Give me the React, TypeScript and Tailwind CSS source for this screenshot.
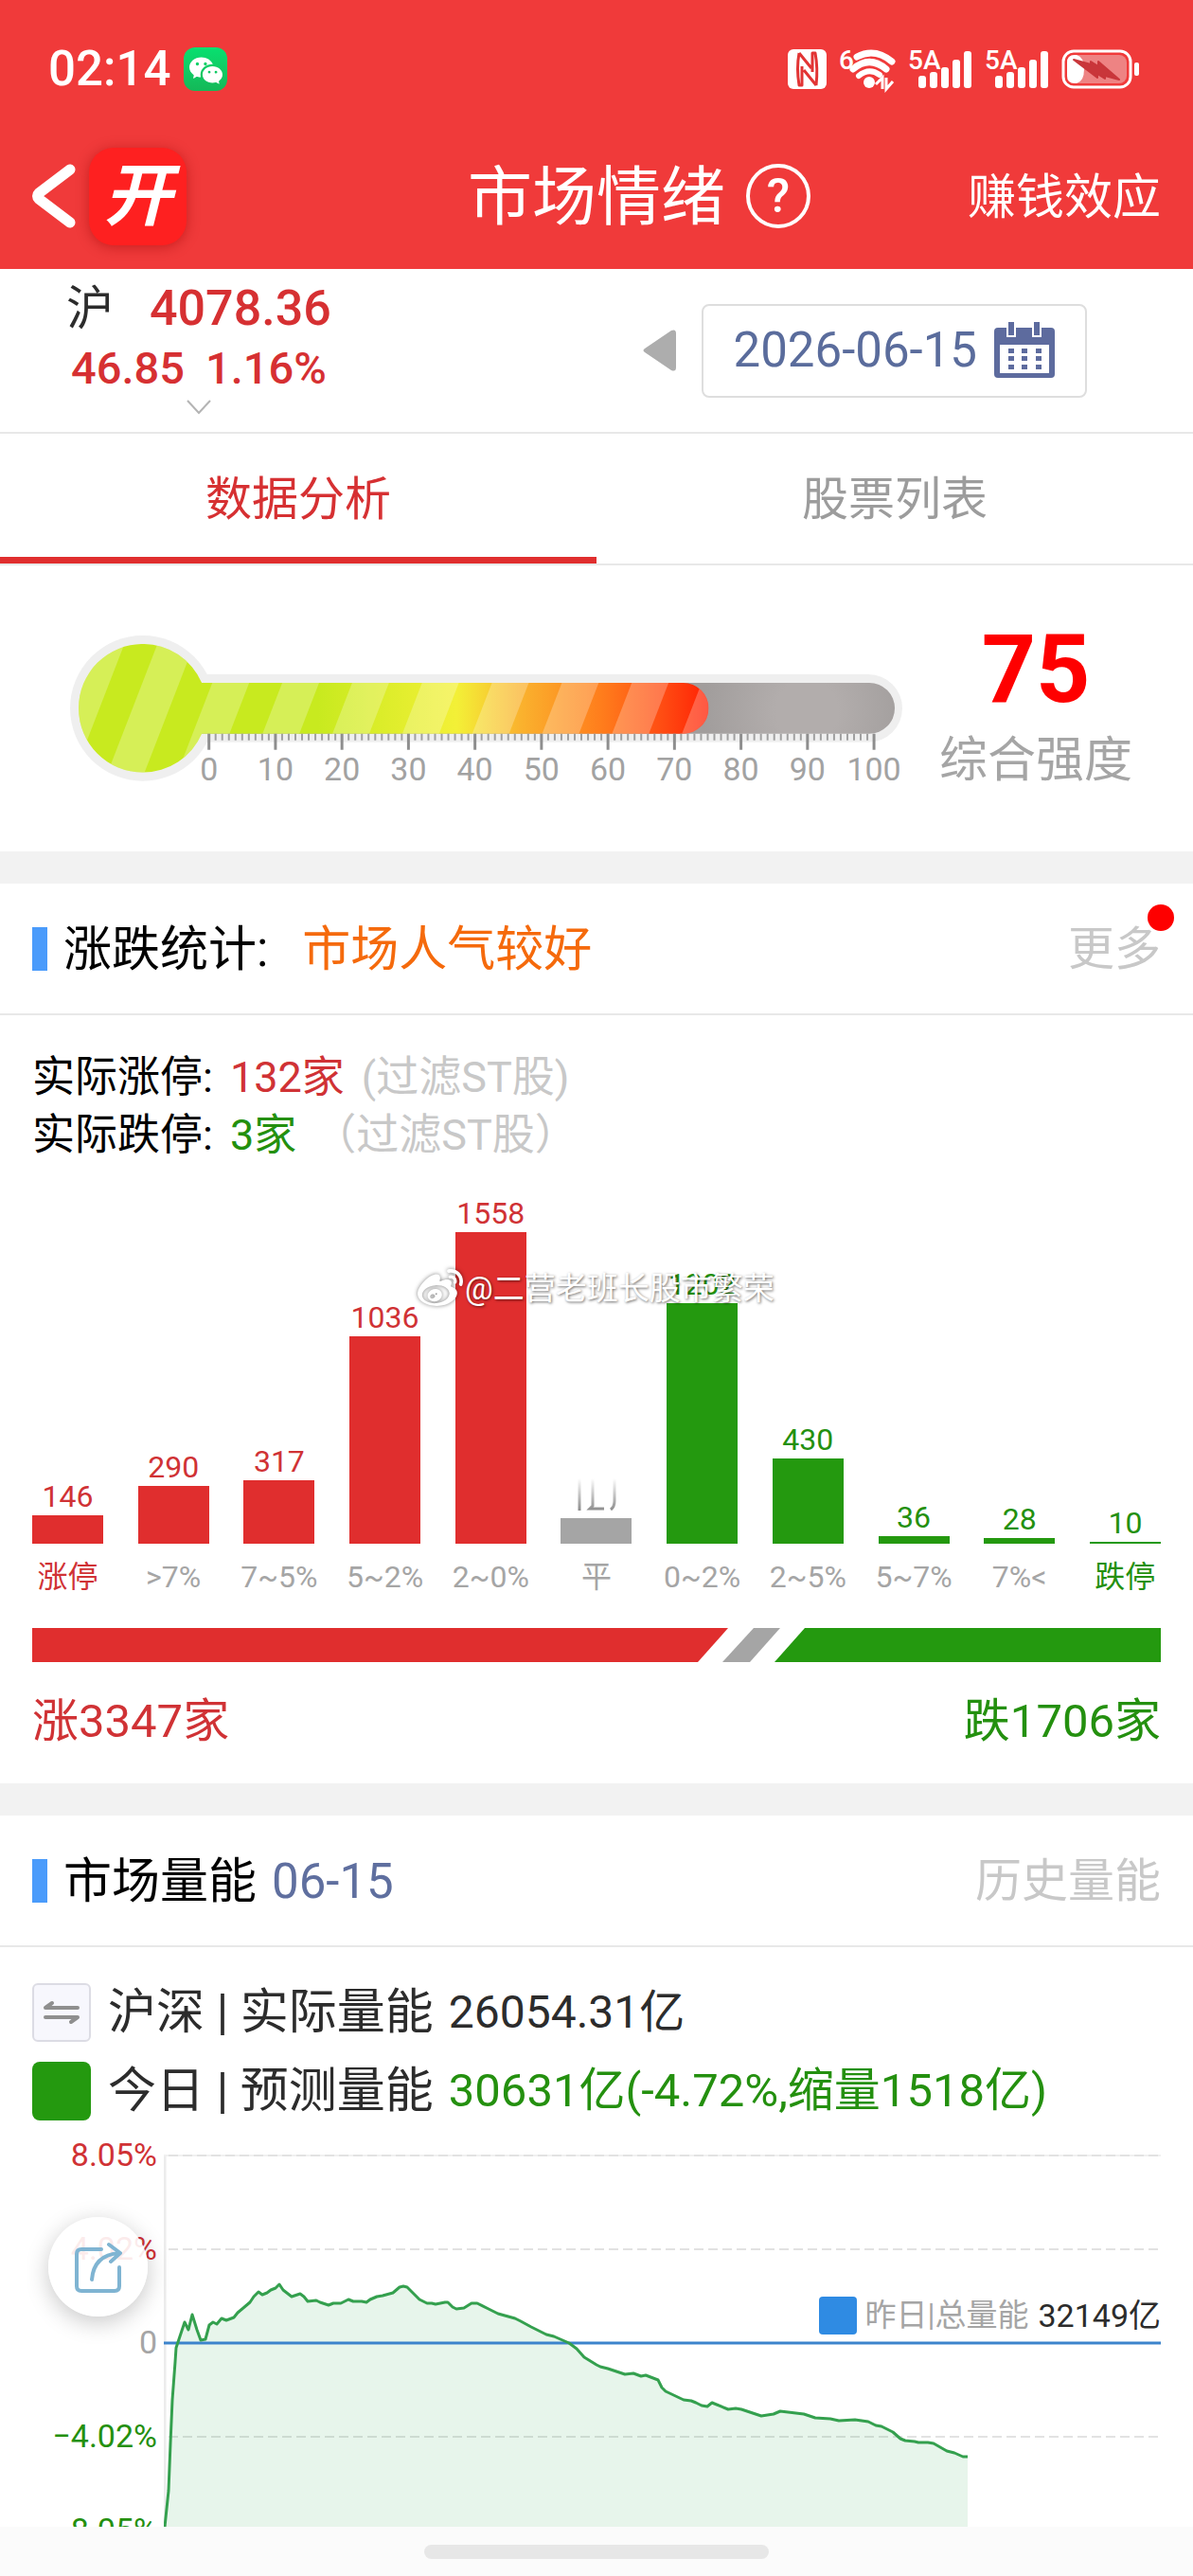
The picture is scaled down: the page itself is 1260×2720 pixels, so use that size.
import type { ReactNode } from "react";
import clsx from "clsx";
import { BsWechat } from "react-icons/bs";
import { FaWeibo } from "react-icons/fa";

type Tone = "up" | "down" | "flat";

const bars: { label: string; value: number; tone: Tone; height: number }[] = [
  { label: "涨停", value: 146, tone: "up", height: 30 },
  { label: ">7%", value: 290, tone: "up", height: 61 },
  { label: "7~5%", value: 317, tone: "up", height: 67 },
  { label: "5~2%", value: 1036, tone: "up", height: 219 },
  { label: "2~0%", value: 1558, tone: "up", height: 329 },
  { label: "平", value: 129, tone: "flat", height: 27 },
  { label: "0~2%", value: 1202, tone: "down", height: 254 },
  { label: "2~5%", value: 430, tone: "down", height: 90 },
  { label: "5~7%", value: 36, tone: "down", height: 8 },
  { label: "7%<", value: 28, tone: "down", height: 6 },
  { label: "跌停", value: 10, tone: "down", height: 2 },
];

const barColor = { up: "bg-[#e02e2e]", down: "bg-[#24990f]", flat: "bg-[#a5a5a5]" };
const textColor = { up: "text-[#d03235]", down: "text-[#24900f]", flat: "text-[#a5a5a5]" };

const volumeLine =
  "1,393 5,355 7,305 9,259 12,219 13,204 16,195 22,177 26,185 30,169 35,185 39,196 44,195 48,180 52,177 56,179 61,173 66,175 74,172 78,167 91,156 95,150 100,145 104,148 109,146 113,143 118,141 122,137 126,143 135,150 144,147 148,150 152,155 161,154 165,156 174,159 179,157 187,157 195,153 200,155 209,155 214,156 218,153 225,150 231,149 242,146 249,140 253,139 257,140 261,144 270,153 278,157 283,157 287,158 297,156 300,156 305,161 309,163 317,162 325,157 331,157 343,163 353,168 371,173 377,176 388,182 404,190 412,192 428,199 436,205 444,214 457,222 461,224 469,226 487,232 496,231 504,234 509,233 522,238 526,246 530,250 549,259 557,260 562,262 568,265 574,266 579,262 596,269 604,268 610,269 631,276 644,274 651,271 676,274 688,278 704,279 713,281 730,280 744,282 752,286 758,287 770,293 778,300 783,302 793,303 797,304 807,304 813,305 827,313 835,315 844,319 849,319";

function Signal() {
  return (
    <svg width="68" height="44" viewBox="0 0 68 44" fill="white" className="overflow-visible" aria-label="5A信号">
      <text x="0" y="22" className="font-medium text-[28px]">5A</text>
      <rect x="11" y="29" width="8" height="13" rx="3" />
      <rect x="23" y="25" width="8" height="17" rx="3" />
      <rect x="35" y="20" width="8" height="22" rx="3" />
      <rect x="47" y="12" width="8" height="30" rx="3" />
      <rect x="59" y="3" width="8" height="39" rx="3" />
    </svg>
  );
}

function StatusBar() {
  return (
    <div className="flex h-[46px] items-center justify-between pr-[57px] pl-[51px]">
      <div className="flex items-center gap-[14px]">
        <span className="text-[51px] leading-[46px] font-medium">02:14</span>
        <span className="flex size-[46px] items-center justify-center rounded-xl bg-gradient-to-b from-[#07e070] to-[#14b858]">
          <BsWechat size={35} />
        </span>
      </div>
      <div className="flex items-center gap-[13px]">
        <svg width="41" height="42" viewBox="0 0 41 42" aria-label="NFC">
          <rect width="41" height="42" rx="6" fill="white" />
          <path
            d="M12 4 Q9 20 12 38 H15 V18 M12 4 L25 20 M30 38 L17 22 M26 24 V4 H29 Q32 20 30 38"
            fill="none"
            stroke="#e23434"
            strokeWidth="3"
            strokeLinejoin="round"
          />
        </svg>
        <svg width="60" height="44" viewBox="0 0 60 44" fill="none" stroke="white" className="overflow-visible" aria-label="Wi-Fi 6">
          <text x="0" y="22" fill="white" stroke="none" className="font-medium text-[28px]">6</text>
          <path d="M19 9 Q38 -1 56 14" strokeWidth="7" strokeLinecap="round" />
          <path d="M15 22 Q32 7 50 22" strokeWidth="7" strokeLinecap="round" />
          <path d="M21 29 Q32 20 43 28" strokeWidth="6" strokeLinecap="round" />
          <circle cx="32" cy="36" r="6" fill="white" stroke="none" />
          <path d="M39 38 L46 31 V43 M50 31 V43 L57 35" strokeWidth="3" />
        </svg>
        <Signal />
        <Signal />
        <svg width="82" height="42" viewBox="0 0 82 42" aria-label="充电中">
          <rect x="2" y="2" width="71" height="38" rx="11" fill="none" stroke="white" strokeWidth="3" />
          <rect x="6" y="6" width="63" height="30" rx="8" fill="#ee8383" />
          <path d="M14 6 H16 Q24 8 24 21 T16 36 H14 Q6 36 6 28 V14 Q6 6 14 6Z" fill="white" />
          <path d="M13 11 L31 16 V13 L39 18 V13 L61 32 L46 28 V31 L38 26 V30 Z" fill="#c9363a" stroke="#c9363a" strokeWidth="2" strokeLinejoin="round" />
          <rect x="77" y="14" width="5" height="14" rx="2" fill="white" />
        </svg>
      </div>
    </div>
  );
}

function Header() {
  return (
    <header className="bg-[#f03a3a] pt-[50px] pb-[25px] text-white">
      <StatusBar />
      <div className="mt-[59px] grid h-[104px] grid-cols-[1fr_auto_1fr] items-center">
        <div className="flex items-center gap-[14px] pl-[34px]">
          <button type="button" aria-label="返回">
            <svg width="46" height="82" viewBox="0 0 46 82" fill="none" stroke="white" strokeWidth="11" strokeLinecap="round" strokeLinejoin="round">
              <path d="M40 13 L7 38 Q4 41 7 44 L40 69" />
            </svg>
          </button>
          <div className="flex size-[103px] items-center justify-center rounded-[26px] bg-[#fe2020] text-[72px] leading-[103px] font-bold italic shadow-[0_2px_14px_rgba(150,0,0,0.45)]">
            开
          </div>
        </div>
        <h1 className="pt-1 text-[68px] leading-[100px]">市场情绪</h1>
        <div className="flex items-center justify-between pr-[34px] pl-[22px]">
          <button type="button" className="flex size-[68px] items-center justify-center rounded-full border-4 border-white text-[50px] leading-[60px] font-medium">
            ?
          </button>
          <a href="#effect" className="pt-1 text-[51px] leading-[60px]">赚钱效应</a>
        </div>
      </div>
    </header>
  );
}

function IndexBar() {
  return (
    <div className="flex h-[174px] items-center justify-between border-b-2 border-[#e8e8e8] pr-[112px] pl-[70px]">
      <button type="button" className="flex flex-col items-center self-start pt-3 text-[#d63032]">
        <span className="flex items-center gap-[38px]">
          <span className="text-[50px] leading-[60px] text-[#2c2c2c]">沪</span>
          <span className="text-[52px] leading-[60px] font-medium">4078.36</span>
        </span>
        <span className="flex gap-[22px] text-[47px] leading-[66px] font-medium">
          <span>46.85</span>
          <span>1.16%</span>
        </span>
        <svg width="26" height="16" viewBox="0 0 26 16" fill="none" stroke="#b4b4b4" strokeWidth="2">
          <path d="M1 1 L13 14 L25 1" />
        </svg>
      </button>
      <div className="flex items-center gap-[26px]">
        <button type="button" aria-label="前一天">
          <svg width="36" height="44" viewBox="0 0 36 44" fill="#adadad">
            <path d="M2 20 L30 1 Q35 -1 35 4 V40 Q35 45 30 43 L2 24 Q-1 22 2 20Z" />
          </svg>
        </button>
        <button type="button" className="flex h-[99px] items-center gap-[18px] rounded-lg border-2 border-[#dedede] px-8 text-[51px] text-[#5a6c9c]">
          2026-06-15
          <svg width="64" height="60" viewBox="0 0 64 60" fill="#5d6b9e">
            <path d="M4 6 H60 Q64 6 64 10 V55 Q64 59 60 59 H4 Q0 59 0 55 V10 Q0 6 4 6Z" />
            <path d="M6 24 H58 V54 H6Z M13 0 H23 V16 H13Z M40 0 H50 V16 H40Z" fill="white" />
            <path d="M15 0 H21 V14 H15Z M42 0 H48 V14 H42Z" />
            <path d="M15 28h6v5h-6z M29 28h6v5h-6z M44 28h6v5h-6z M15 36h6v5h-6z M29 36h6v5h-6z M44 36h6v5h-6z M15 45h6v5h-6z M29 45h6v5h-6z M44 45h6v5h-6z" />
          </svg>
        </button>
      </div>
    </div>
  );
}

function Tabs() {
  return (
    <div role="tablist" className="grid h-[139px] grid-cols-2 border-b-2 border-[#e8e8e8] text-[49px]">
      <button type="button" role="tab" aria-selected="true" className="border-b-[7px] border-[#e02e2e] pt-[9px] text-[#d63032]">
        数据分析
      </button>
      <button type="button" role="tab" aria-selected="false" className="pt-0.5 text-[#9c9c9c]">
        股票列表
      </button>
    </div>
  );
}

function Thermometer() {
  const ticks = Array.from({ length: 101 }, (_, i) => i);
  const stripes = Array.from({ length: 10 }, (_, i) => 2 + i * 74);

  return (
    <svg viewBox="0 0 888 164" className="block h-auto w-full" role="img" aria-label="综合强度 75">
      <defs>
        <linearGradient id="heat" gradientUnits="userSpaceOnUse" x1="9" y1="0" x2="676" y2="0">
          <stop offset="0.38" stopColor="#c8ea1f" />
          <stop offset="0.6" stopColor="#f3f037" />
          <stop offset="0.7" stopColor="#fab32e" />
          <stop offset="0.83" stopColor="#ff7d1c" />
          <stop offset="0.93" stopColor="#ff4a12" />
          <stop offset="1" stopColor="#ff2004" />
        </linearGradient>
        <radialGradient id="tube" gradientUnits="userSpaceOnUse" cx="780" cy="80" r="110">
          <stop offset="0.3" stopColor="#b2adac" />
          <stop offset="1" stopColor="#a19d9c" />
        </radialGradient>
        <clipPath id="liquid">
          <circle cx="77" cy="77" r="68" />
          <path d="M77 50 H649 A27 27 0 0 1 649 104 H77Z" />
        </clipPath>
      </defs>
      <circle cx="77" cy="77" r="77" fill="#efefef" />
      <rect x="77" y="41" width="804" height="72" rx="36" fill="#efefef" />
      <rect x="77" y="50" width="796" height="54" rx="27" fill="url(#tube)" />
      <g clipPath="url(#liquid)">
        <rect width="700" height="160" fill="url(#heat)" />
        {stripes.map((x) => (
          <path key={x} d={`M${x + 20} 0 h39 l-62 160 h-39Z`} fill="white" fillOpacity="0.25" />
        ))}
      </g>
      {ticks.map((i) => {
        const major = i % 10 === 0;
        const x = 147 + i * 7.04;
        return (
          <line key={i} x1={x} x2={x} y1="104" y2={major ? 121 : 111} stroke={major ? "#8e8e8e" : "#a0a0a0"} strokeWidth={major ? 3 : 2} />
        );
      })}
      {ticks.filter((i) => i % 10 === 0).map((i) => (
        <text key={i} x={147 + i * 7.04} y="153" textAnchor="middle" fill="#a2a2a2" className="text-[34px]">
          {i}
        </text>
      ))}
    </svg>
  );
}

function SectionHeader({ title, extra, children }: { title: string; extra: ReactNode; children: ReactNode }) {
  return (
    <div className="flex h-[139px] items-center justify-between border-b-2 border-[#e8e8e8] px-[34px]">
      <div className="flex items-center">
        <span className="h-[46px] w-4 bg-[#4a9bfb]" />
        <h2 className="ml-[17px] pt-0.5 text-[51px] leading-[60px] text-black">{title}</h2>
        {extra}
      </div>
      {children}
    </div>
  );
}

function BarChart() {
  return (
    <div className="relative">
      <ul className="flex justify-between">
        {bars.map((bar) => (
          <li key={bar.label} className={clsx("flex w-[75px] flex-col items-center text-[32px] whitespace-nowrap", textColor[bar.tone])}>
            <div className="flex h-[401px] w-full flex-col items-center justify-end">
              {bar.tone === "flat" ? (
                <svg width="44" height="34" viewBox="0 0 44 34" className="mb-2" fill="none" stroke="url(#fade)" strokeWidth="3" aria-label={String(bar.value)}>
                  <defs>
                    <linearGradient id="fade" gradientUnits="userSpaceOnUse" x1="0" y1="0" x2="0" y2="34">
                      <stop offset="0" stopColor="#8c8c8c" stopOpacity="0" />
                      <stop offset="1" stopColor="#8c8c8c" />
                    </linearGradient>
                  </defs>
                  <path d="M4 0 V34 M18 0 V29 L15 32 H30 M41 0 V24 Q41 30 37 33" />
                </svg>
              ) : (
                <span className="leading-10">{bar.value}</span>
              )}
              <div className={clsx("w-full shrink-0", barColor[bar.tone])} style={{ height: bar.height }} />
            </div>
            <span className={clsx("mt-[15px] leading-10", bar.label.includes("停") ? "" : "text-[#a5a5a5]")}>{bar.label}</span>
          </li>
        ))}
      </ul>
      <div className="absolute top-[108px] left-[407px] flex items-center gap-0.5 text-[33px] leading-[48px] whitespace-nowrap text-white">
        <FaWeibo size={48} className="drop-shadow-[0_0_2px_rgba(0,0,0,0.5)]" />
        <span className="[text-shadow:1px_1px_3px_rgba(0,0,0,0.6)]">@二营老班长股市繁荣</span>
      </div>
    </div>
  );
}

function RiseFallSection() {
  return (
    <section>
      <SectionHeader title="涨跌统计:" extra={<span className="ml-9 pt-0.5 text-[51px] leading-[60px] text-[#f56a0c]">市场人气较好</span>}>
        <a href="#more" className="relative pt-0.5 text-[49px] leading-[60px] text-[#c8c8c8]">
          更多
          <span className="absolute -top-4 -right-[14px] size-7 rounded-full bg-[#fe0000]" />
        </a>
      </SectionHeader>
      <div className="px-[34px] pt-[35px] pb-[42px]">
        <p className="flex text-[45px] leading-[61px] text-black">
          <span>实际涨停:</span>
          <span className="ml-[18px] text-[#d03235]">132家</span>
          <span className="ml-[18px] text-[#c8c8c8]">(过滤ST股)</span>
        </p>
        <p className="flex text-[45px] leading-[61px] text-black">
          <span>实际跌停:</span>
          <span className="ml-[18px] text-[#24900f]">3家</span>
          <span className="ml-[18px] text-[#c8c8c8]">（过滤ST股）</span>
        </p>
        <BarChart />
        <svg viewBox="0 0 1192 36" preserveAspectRatio="none" className="mt-[34px] block h-9 w-full">
          <path d="M0 0 H735 L703 36 H0Z" fill="#e02e2e" />
          <path d="M762 0 H790 L758 36 H729Z" fill="#a5a5a5" />
          <path d="M816 0 H1192 V36 H784Z" fill="#24990f" />
        </svg>
        <div className="mt-10 flex justify-between text-[49px] leading-[46px]">
          <span className="text-[#d03235]">涨3347家</span>
          <span className="text-[#24900f]">跌1706家</span>
        </div>
      </div>
    </section>
  );
}

function VolumeChart() {
  return (
    <div className="relative flex h-[419px] gap-[7px] overflow-hidden pr-[34px]">
      <div className="flex w-[166px] shrink-0 flex-col gap-[47px] text-right text-[34px] leading-[52px]">
        <span className="text-[#d03235]">8.05%</span>
        <span className="text-[#d03235]">4.02%</span>
        <span className="text-[#a5a5a5]">0</span>
        <span className="text-[#24900f]">−4.02%</span>
        <span className="text-[#24900f]">−8.05%</span>
      </div>
      <svg viewBox="0 0 1053 393" preserveAspectRatio="none" className="mt-[26px] h-[393px] min-w-0 flex-1" fill="none" strokeWidth="2">
        <path d="M1 0 V393" stroke="#ececec" strokeWidth="3" />
        <path d="M0 1 H1053" stroke="#f0f0f0" />
        <path d="M5 1 H1053 M5 100 H1053 M5 298 H1053" stroke="#e2e2e2" strokeDasharray="10 5" />
        <polygon points={`${volumeLine} 849,393`} fill="#24a048" fillOpacity="0.11" />
        <path d="M0 199 H1053" stroke="#3c84cc" strokeWidth="3" />
        <polyline points={volumeLine} stroke="#34a04e" strokeWidth="3" strokeLinejoin="round" />
      </svg>
      <div className="absolute top-[176px] right-[34px] flex items-center text-[34px] leading-10">
        <span className="mr-2 size-10 rounded-sm bg-[#2f8be3]" />
        <span className="mr-[10px] text-[33px] text-[#a5a5a5]">昨日|总量能</span>
        <span className="text-[#2c2c2c]">32149亿</span>
      </div>
    </div>
  );
}

function VolumeSection() {
  return (
    <section>
      <SectionHeader title="市场量能" extra={<span className="ml-4 pt-0.5 text-[51px] leading-[60px] text-[#5f6f9f]">06-15</span>}>
        <a href="#history" className="pt-0.5 text-[49px] leading-[60px] text-[#c8c8c8]">历史量能</a>
      </SectionHeader>
      <div className="px-[34px] pt-[27px] text-[51px] leading-[83px] text-[#2c2c2c]">
        <div className="flex items-center">
          <button type="button" aria-label="切换" className="flex size-[62px] items-center justify-center rounded-md border-2 border-[#dcdce4] bg-[#f7f7fd]">
            <svg width="40" height="28" viewBox="0 0 40 28" fill="none" stroke="#8f8f8f" strokeWidth="4" strokeLinecap="round" strokeLinejoin="round">
              <path d="M37 9 H3 L10 4 M3 19 H37 L30 24" />
            </svg>
          </button>
          <span className="ml-[18px]">沪深 | 实际量能</span>
          <span className="ml-4 text-[48px]">26054.31亿</span>
        </div>
        <div className="flex items-center">
          <span className="size-[62px] rounded-lg bg-[#24990f]" />
          <span className="ml-[18px]">今日 | 预测量能</span>
          <span className="ml-4 text-[49px] text-[#24900f]">30631亿(-4.72%,缩量1518亿)</span>
        </div>
      </div>
      <VolumeChart />
    </section>
  );
}

export default function App() {
  return (
    <div className="min-h-screen bg-white font-[Roboto,'Noto_Sans_CJK_SC',sans-serif]">
      <Header />
      <main>
        <IndexBar />
        <Tabs />
        <section className="flex h-[302px] items-start gap-8 pt-[74px] pr-[64px] pl-[74px]">
          <div className="min-w-0 flex-1">
            <Thermometer />
          </div>
          <div className="flex w-[204px] shrink-0 flex-col items-center">
            <strong className="text-[100px] leading-[72px] text-[#fe0000]">75</strong>
            <span className="mt-[26px] text-[51px] leading-[68px] text-[#a5a5a5]">综合强度</span>
          </div>
        </section>
        <div className="h-[34px] bg-[#f2f2f2]" />
        <RiseFallSection />
        <div className="h-[34px] bg-[#f2f2f2]" />
        <VolumeSection />
      </main>
      <footer className="flex h-[52px] items-center justify-center bg-[#fbfbfb]">
        <span className="h-[15px] w-[364px] rounded-full bg-[#e7e7e7]" />
      </footer>

      <button type="button" aria-label="分享" className="fixed bottom-[274px] left-[51px] flex size-[105px] items-center justify-center rounded-full bg-white/90 shadow-[0_6px_24px_rgba(0,0,0,0.22)]">
        <svg width="50" height="54" viewBox="0 0 50 54" fill="none" stroke="#7fb4d2" strokeWidth="4" strokeLinecap="round" strokeLinejoin="round">
          <path d="M28 8 H7 Q2 8 2 13 V47 Q2 52 7 52 H42 Q47 52 47 47 V27" />
          <path d="M18 40 Q20 14 47 12 M36 3 L48 12 L38 21" />
        </svg>
      </button>
    </div>
  );
}
